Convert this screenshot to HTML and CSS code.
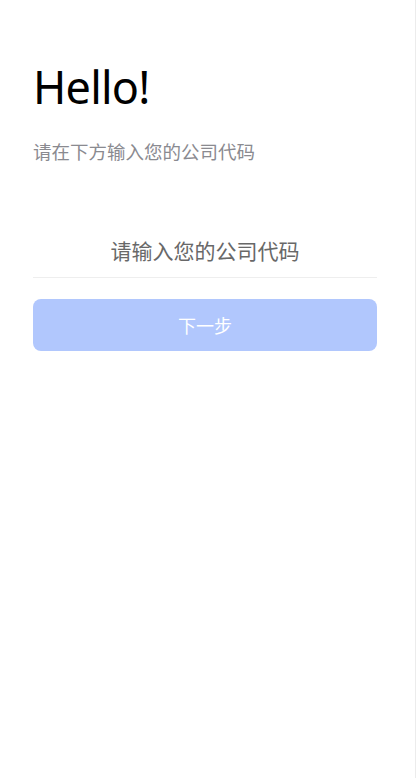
FILE: index.html
```html
<!DOCTYPE html>
<html lang="zh-CN">
<head>
<meta charset="utf-8">
<title>Hello</title>
<link rel="stylesheet" href="styles.css">
</head>
<body>
<main class="page">
  <h1 class="title">Hello!</h1>
  <p class="subtitle">请在下方输入您的公司代码</p>
  <div class="field">
    <input class="code-input" type="text" placeholder="请输入您的公司代码">
  </div>
  <button class="next-btn" type="button">下一步</button>
</main>
</body>
</html>
```

FILE: styles.css
```css
html, body {
  margin: 0;
  padding: 0;
  background: #ffffff;
}

body {
  font-family: "Noto Sans", "Noto Sans CJK SC", sans-serif;
}

.page {
  box-sizing: border-box;
  min-height: 778px;
  padding: 60px 38px 0 33px;
  border-right: 1px solid #ececec;
  display: flex;
  flex-direction: column;
}

.title {
  margin: 0;
  font-size: 45px;
  line-height: 54px;
  font-weight: 400;
  color: #000000;
  letter-spacing: -0.8px;
}

.subtitle {
  margin: 25px 0 0;
  font-size: 18.5px;
  line-height: 24px;
  color: #8a8a90;
  font-family: "Noto Sans CJK SC", sans-serif;
}

.field {
  margin-top: 59px;
  border-bottom: 1px solid #eeeeee;
}

.code-input {
  display: block;
  box-sizing: border-box;
  width: 100%;
  height: 55px;
  border: none;
  outline: none;
  background: transparent;
  padding: 0;
  text-align: center;
  font-family: "Noto Sans CJK SC", sans-serif;
  font-size: 21px;
  color: #333333;
}

.code-input::placeholder {
  color: #686868;
  opacity: 1;
}

.next-btn {
  margin-top: 21px;
  height: 52px;
  width: 100%;
  border: none;
  border-radius: 8px;
  background: #b1c7fd;
  color: #ffffff;
  font-family: "Noto Sans CJK SC", sans-serif;
  font-size: 18px;
  padding: 0;
}
```
